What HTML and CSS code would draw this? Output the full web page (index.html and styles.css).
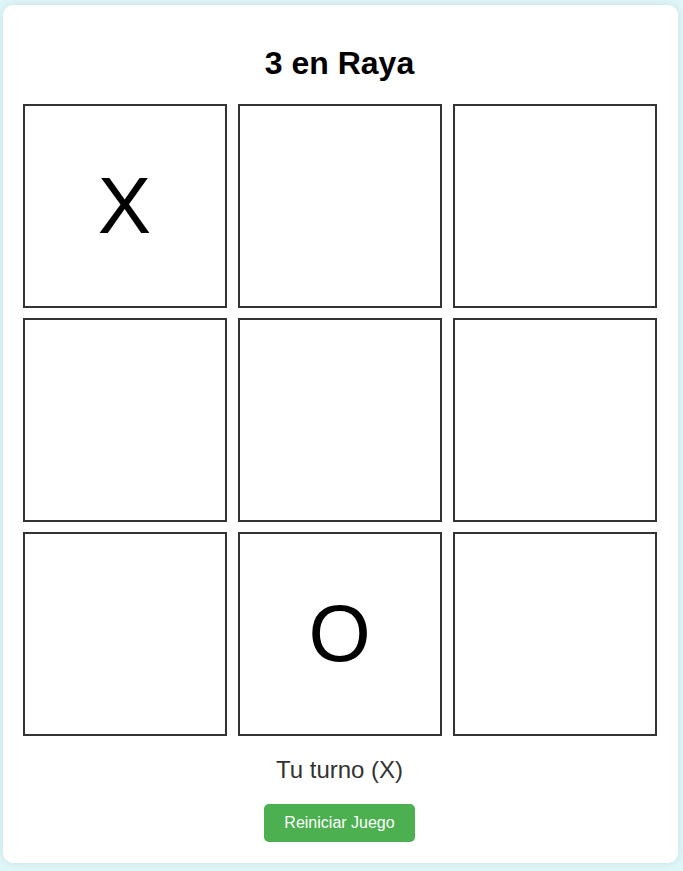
FILE: index.html
```html
<!DOCTYPE html>
<html lang="es">
<head>
<meta charset="utf-8">
<title>3 en Raya</title>
<link rel="stylesheet" href="styles.css">
</head>
<body>
<div class="card">
  <h1 class="title">3 en Raya</h1>
  <div class="board">
    <div class="cell">X</div>
    <div class="cell"></div>
    <div class="cell"></div>
    <div class="cell"></div>
    <div class="cell"></div>
    <div class="cell"></div>
    <div class="cell"></div>
    <div class="cell">O</div>
    <div class="cell"></div>
  </div>
  <p class="status">Tu turno (X)</p>
  <button class="reset">Reiniciar Juego</button>
</div>
</body>
</html>
```
FILE: styles.css
```css
html, body {
  margin: 0;
  padding: 0;
}
body {
  background: #e0f7fa;
  font-family: "Liberation Sans", Arial, sans-serif;
  min-height: 871px;
  padding: 5px 5px 5px 3px;
  box-sizing: border-box;
}
.card {
  background: #fff;
  border-radius: 10px;
  box-shadow: 0 0 10px rgba(0, 0, 0, 0.1);
  padding: 20px 2px 21px 0;
  display: flex;
  flex-direction: column;
  align-items: center;
}
.title {
  font-size: 32px;
  font-weight: bold;
  margin: 20px 0 22px;
  color: #000;
  line-height: normal;
}
.board {
  display: grid;
  grid-template-columns: repeat(3, 204px);
  grid-template-rows: repeat(3, 204px);
  column-gap: 11px;
  row-gap: 10px;
}
.cell {
  border: 2px solid #333;
  display: flex;
  align-items: center;
  justify-content: center;
  font-size: 80px;
  color: #000;
}
.status {
  font-size: 24px;
  color: #333;
  margin: 20px 0 20px;
  line-height: normal;
}
.reset {
  background: #4caf50;
  color: #fff;
  border: none;
  border-radius: 5px;
  font-family: "Liberation Sans", Arial, sans-serif;
  font-size: 16px;
  height: 38px;
  padding: 0 20px;
  cursor: pointer;
}
```
